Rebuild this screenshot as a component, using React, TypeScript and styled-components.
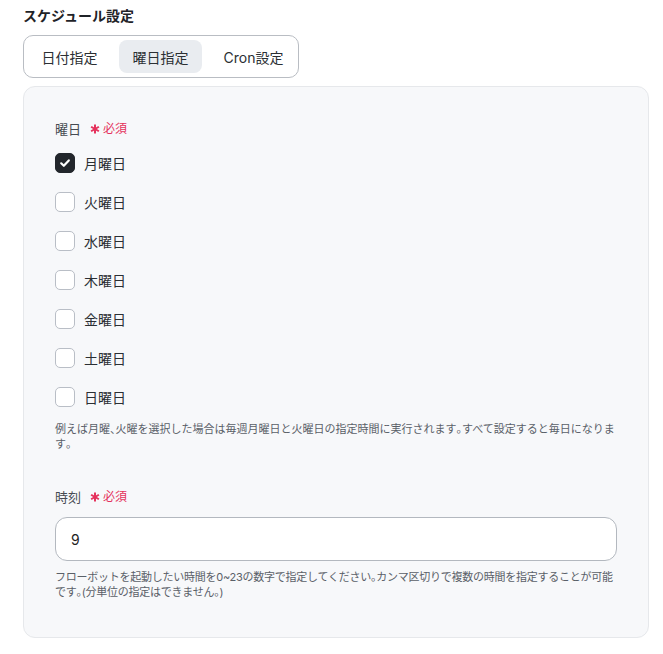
import React from "react";
import styled, { createGlobalStyle } from "styled-components";

const Global = createGlobalStyle`
  html, body { margin: 0; padding: 0; background: #fff; }
  body { font-family: "Inter", "Noto Sans CJK JP", sans-serif; color: #222; }
`;

const Page = styled.div`
  padding: 6px 14px 16px 23px;
  width: 663px;
  box-sizing: border-box;
`;

const Title = styled.div`
  font-size: 14px;
  font-weight: 700;
  color: #1f2328;
  line-height: 20px;
  margin-bottom: 9px;
`;

const TabGroup = styled.div`
  display: inline-flex;
  align-items: center;
  gap: 8px;
  padding: 4px 1px 4px 4px;
  border: 1px solid #b9bdc3;
  border-radius: 10px;
  background: #fff;
  margin-bottom: 8px;
`;

const Tab = styled.button<{ $active?: boolean }>`
  border: none;
  font-family: inherit;
  font-size: 14px;
  color: #2b2f33;
  height: 33px;
  padding: 0 13.5px;
  border-radius: 8px;
  background: ${(p) => (p.$active ? "#e9ecf0" : "transparent")};
  cursor: pointer;
`;

const Panel = styled.div`
  background: #f7f8fa;
  border: 1px solid #e6e8eb;
  border-radius: 12px;
  padding: 33px 31px 37px 31px;
  box-sizing: border-box;
  width: 626px;
`;

const Label = styled.div`
  font-size: 13px;
  color: #464b52;
  display: flex;
  align-items: center;
  gap: 9px;
  line-height: 18px;
`;

const Required = styled.span`
  color: #e5325c;
  font-size: 12px;
  display: inline-flex;
  align-items: center;
  gap: 3px;
`;

const List = styled.div`
  display: flex;
  flex-direction: column;
  gap: 19px;
  margin-top: 15px;
`;

const Row = styled.label`
  display: flex;
  align-items: center;
  gap: 9px;
  font-size: 14px;
  color: #2b2f33;
  height: 20px;
`;

const Box = styled.span<{ $checked?: boolean }>`
  width: 20px;
  height: 20px;
  box-sizing: border-box;
  border-radius: 5px;
  border: 1px solid ${(p) => (p.$checked ? "#22262b" : "#b9bec6")};
  background: ${(p) => (p.$checked ? "#22262b" : "#fff")};
  display: flex;
  align-items: center;
  justify-content: center;
`;

const Help = styled.p<{ $spacing?: number }>`
  font-size: 11px;
  color: #5a6068;
  line-height: 15px;
  margin: 0;
  letter-spacing: ${(p) => p.$spacing ?? 0}px;
`;

const Punct = styled.span`
  font-feature-settings: "halt";
`;

const Section = styled.div<{ $mt?: number }>`
  margin-top: ${(p) => p.$mt ?? 0}px;
`;

const Input = styled.input`
  display: block;
  width: 100%;
  box-sizing: border-box;
  height: 44px;
  border: 1px solid #b3b8bf;
  border-radius: 12px;
  padding: 0 15px;
  font-family: inherit;
  font-size: 14px;
  color: #222;
  background: #fff;
  margin-top: 11px;
  margin-bottom: 9px;
  outline: none;
`;

const Star = () => (
  <svg width="10" height="10" viewBox="0 0 10 10">
    <g stroke="#e5325c" strokeWidth="2" strokeLinecap="butt">
      <line x1="5" y1="0.5" x2="5" y2="9.5" />
      <line x1="1.1" y1="2.75" x2="8.9" y2="7.25" />
      <line x1="1.1" y1="7.25" x2="8.9" y2="2.75" />
    </g>
  </svg>
);

const withPunct = (text: string) =>
  text.split(/([、。])/).map((part, i) =>
    part === "、" || part === "。" ? <Punct key={i}>{part}</Punct> : part
  );

const days = ["月曜日", "火曜日", "水曜日", "木曜日", "金曜日", "土曜日", "日曜日"];

export default function App() {
  return (
    <>
      <Global />
      <Page>
        <Title>スケジュール設定</Title>
        <TabGroup>
          <Tab>日付指定</Tab>
          <Tab $active>曜日指定</Tab>
          <Tab>Cron設定</Tab>
        </TabGroup>
        <Panel>
          <Label>
            曜日
            <Required>
              <Star />
              必須
            </Required>
          </Label>
          <List>
            {days.map((d, i) => (
              <Row key={d}>
                <Box $checked={i === 0}>
                  {i === 0 && (
                    <svg width="12" height="12" viewBox="0 0 12 12">
                      <path d="M2.2 6.3 L4.8 8.8 L9.8 3.4" fill="none" stroke="#fff" strokeWidth="2.2" strokeLinecap="round" strokeLinejoin="round" />
                    </svg>
                  )}
                </Box>
                {d}
              </Row>
            ))}
          </List>
          <Section $mt={15}>
            <Help>
              {withPunct(
                "例えば月曜、火曜を選択した場合は毎週月曜日と火曜日の指定時間に実行されます。すべて設定すると毎日になります。"
              )}
            </Help>
          </Section>
          <Section $mt={36}>
            <Label>
              時刻
              <Required>
                <Star />
                必須
              </Required>
            </Label>
            <Input defaultValue="9" />
            <Help $spacing={-0.25}>
              {withPunct(
                "フローボットを起動したい時間を0~23の数字で指定してください。カンマ区切りで複数の時間を指定することが可能です。(分単位の指定はできません。)"
              )}
            </Help>
          </Section>
        </Panel>
      </Page>
    </>
  );
}
